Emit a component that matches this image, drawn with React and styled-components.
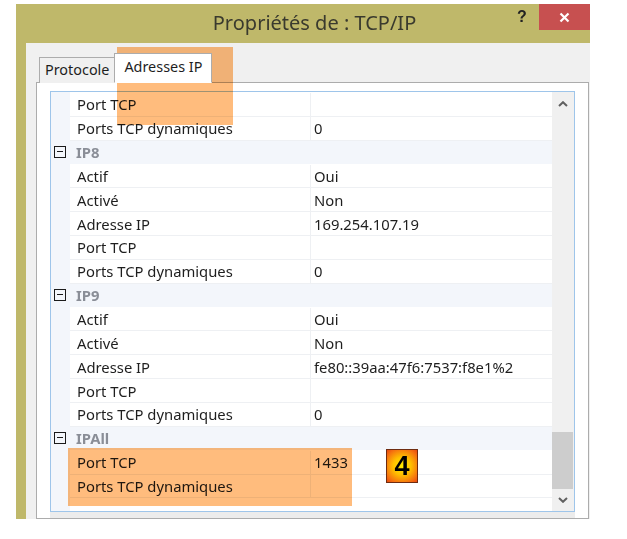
import React from "react";
import styled, { createGlobalStyle } from "styled-components";

const Global = createGlobalStyle`
  html, body { margin: 0; padding: 0; background: #ffffff; }
  body { font-family: "Noto Sans", "Open Sans", sans-serif; }
`;

const Page = styled.div`
  position: relative;
  width: 627px;
  height: 539px;
  box-sizing: border-box;
  padding: 4px 0 0 16px;
  background: #ffffff;
  overflow: hidden;
`;

const Window = styled.div`
  width: 574px;
  height: 515px;
  display: flex;
  flex-direction: column;
  overflow: hidden;
`;

const TitleBar = styled.div`
  height: 39px;
  flex-shrink: 0;
  background: #bfb86a;
  display: flex;
  align-items: flex-start;
`;

const Title = styled.div`
  flex: 1;
  text-align: center;
  padding-left: 108px;
  padding-top: 6px;
  font-size: 20px;
  line-height: 26px;
  color: #3a3a2e;
  white-space: nowrap;
`;

const Controls = styled.div`
  display: flex;
  align-items: flex-start;
`;

const HelpButton = styled.div`
  width: 34px;
  height: 26px;
  display: flex;
  align-items: center;
  justify-content: center;
  font-family: "Liberation Sans", Arial, sans-serif;
  font-weight: bold;
  font-size: 16px;
  color: #222222;
`;

const CloseButton = styled.div`
  width: 51px;
  height: 26px;
  background: #c75050;
  display: flex;
  align-items: center;
  justify-content: center;
`;

const Body = styled.div`
  flex: 1;
  display: flex;
  min-height: 0;
`;

const SideBorder = styled.div`
  width: 10px;
  background: #bfb86a;
  flex-shrink: 0;
`;

const Client = styled.div`
  flex: 1;
  background: #f0f0f0;
  padding: 11px 1px 0 10px;
  display: flex;
  flex-direction: column;
  min-width: 0;
`;

const TabStrip = styled.div`
  display: flex;
  align-items: flex-end;
  height: 29px;
  padding-left: 3px;
  margin-bottom: -1px;
  position: relative;
  z-index: 1;
`;

const Tab = styled.div`
  box-sizing: border-box;
  height: ${(p) => (p.$active ? "30px" : "26px")};
  padding: ${(p) => (p.$active ? "0 9px" : "0 5px")};
  margin-left: ${(p) => (p.$active ? "-1px" : "0")};
  border: 1px solid #acacac;
  border-bottom: ${(p) => (p.$active ? "1px solid #ffffff" : "none")};
  background: ${(p) => (p.$active ? "#ffffff" : "#f0f0f0")};
  font-size: 14.4px;
  line-height: ${(p) => (p.$active ? "26px" : "24px")};
  color: #1e1e1e;
  white-space: nowrap;
`;

const Panel = styled.div`
  flex: 1;
  background: #ffffff;
  border: 1px solid #acacac;
  padding: 8px 13px 0 13px;
  display: flex;
  flex-direction: column;
  min-height: 0;
`;

const ListBox = styled.div`
  height: 419px;
  flex-shrink: 0;
  border: 1px solid #9ec5ea;
  display: flex;
  background: #ffffff;
`;

const StatusStrip = styled.div`
  height: 8px;
  background: #ececec;
`;

const Rows = styled.div`
  flex: 1;
  display: flex;
  flex-direction: column;
  padding-top: 1px;
  background: linear-gradient(to right, #f3f6fb 19px, #ffffff 19px);
`;

const Row = styled.div`
  height: 23.85px;
  box-sizing: border-box;
  display: grid;
  grid-template-columns: 19px 241px 1fr;
  flex-shrink: 0;
`;

const Gutter = styled.div`
  background: #f3f6fb;
  display: flex;
  align-items: center;
  padding-left: 3px;
`;

const ExpandBox = styled.div`
  width: 12px;
  height: 12px;
  box-sizing: border-box;
  border: 1px solid #1a1a1a;
  display: flex;
  align-items: center;
  justify-content: center;
  margin-top: -2px;
  &::after {
    content: "";
    width: 6px;
    height: 1.3px;
    background: #1a1a1a;
  }
`;

const NameCell = styled.div`
  border-bottom: 1px solid #eef0f3;
  border-right: 1px solid #eef0f3;
  padding-left: 7px;
  display: flex;
  align-items: center;
  font-size: 14.8px;
  color: #1e1e1e;
  white-space: nowrap;
`;

const ValueCell = styled.div`
  border-bottom: 1px solid #eef0f3;
  padding-left: 3px;
  display: flex;
  align-items: center;
  font-size: 14.8px;
  color: #1e1e1e;
  white-space: nowrap;
`;

const CategoryCell = styled.div`
  grid-column: 2 / 4;
  background: #f3f6fb;
  border-bottom: 1px solid #ffffff;
  padding-left: 6px;
  display: flex;
  align-items: center;
  font-size: 14.8px;
  font-weight: bold;
  color: #8a8e97;
`;

const ScrollBar = styled.div`
  width: 22px;
  background: #f0f0f0;
  display: flex;
  flex-direction: column;
`;

const ArrowButton = styled.div`
  height: ${(p) => p.$h}px;
  display: flex;
  align-items: center;
  justify-content: center;
  flex-shrink: 0;
`;

const Track = styled.div`
  flex: 1;
  display: flex;
  flex-direction: column;
  justify-content: flex-end;
`;

const Thumb = styled.div`
  height: 57px;
  margin-right: 1px;
  background: #cdcdcd;
`;

const Highlight = styled.div`
  position: absolute;
  background: #ffbc7d;
  mix-blend-mode: multiply;
  pointer-events: none;
`;

const Badge = styled.div`
  position: absolute;
  left: 386px;
  top: 449px;
  width: 32px;
  height: 34px;
  box-sizing: border-box;
  border: 1px solid #6e2c10;
  background: radial-gradient(circle at 50% 50%, #ffec00 0%, #ffc000 40%, #f5700f 80%, #e8480f 100%);
  display: flex;
  align-items: center;
  justify-content: center;
  font-family: "Liberation Sans", Arial, sans-serif;
  font-weight: bold;
  font-size: 27px;
  color: #000000;
`;

const Chevron = ({ up }) => (
  <svg width="10" height="6" viewBox="0 0 10 6">
    <polyline
      points={up ? "1,5 5,1.2 9,5" : "1,1 5,4.8 9,1"}
      fill="none"
      stroke="#606060"
      strokeWidth="2"
    />
  </svg>
);

const data = [
  { name: "Port TCP", value: "" },
  { name: "Ports TCP dynamiques", value: "0" },
  { cat: "IP8" },
  { name: "Actif", value: "Oui" },
  { name: "Activé", value: "Non" },
  { name: "Adresse IP", value: "169.254.107.19" },
  { name: "Port TCP", value: "" },
  { name: "Ports TCP dynamiques", value: "0" },
  { cat: "IP9" },
  { name: "Actif", value: "Oui" },
  { name: "Activé", value: "Non" },
  { name: "Adresse IP", value: "fe80::39aa:47f6:7537:f8e1%2" },
  { name: "Port TCP", value: "" },
  { name: "Ports TCP dynamiques", value: "0" },
  { cat: "IPAll" },
  { name: "Port TCP", value: "1433" },
  { name: "Ports TCP dynamiques", value: "" },
];

export default function App() {
  return (
    <>
      <Global />
      <Page>
        <Window>
          <TitleBar>
            <Title>Propriétés de : TCP/IP</Title>
            <Controls>
              <HelpButton>?</HelpButton>
              <CloseButton>
                <svg width="11" height="11" viewBox="0 0 11 11">
                  <path d="M1.5 1.5 L9.5 9.5 M9.5 1.5 L1.5 9.5" stroke="#ffffff" strokeWidth="2.2" />
                </svg>
              </CloseButton>
            </Controls>
          </TitleBar>
          <Body>
            <SideBorder />
            <Client>
              <TabStrip>
                <Tab>Protocole</Tab>
                <Tab $active>Adresses IP</Tab>
              </TabStrip>
              <Panel>
                <ListBox>
                  <Rows>
                    {data.map((d, i) =>
                      d.cat ? (
                        <Row key={i}>
                          <Gutter>
                            <ExpandBox />
                          </Gutter>
                          <CategoryCell>{d.cat}</CategoryCell>
                        </Row>
                      ) : (
                        <Row key={i}>
                          <Gutter />
                          <NameCell>{d.name}</NameCell>
                          <ValueCell>{d.value}</ValueCell>
                        </Row>
                      )
                    )}
                  </Rows>
                  <ScrollBar>
                    <ArrowButton $h={24}>
                      <Chevron up />
                    </ArrowButton>
                    <Track>
                      <Thumb />
                    </Track>
                    <ArrowButton $h={22}>
                      <Chevron />
                    </ArrowButton>
                  </ScrollBar>
                </ListBox>
                <StatusStrip />
              </Panel>
            </Client>
          </Body>
        </Window>
        <Highlight style={{ left: 117, top: 47, width: 116, height: 78 }} />
        <Highlight style={{ left: 68, top: 448, width: 284, height: 58 }} />
        <Badge>4</Badge>
      </Page>
    </>
  );
}
